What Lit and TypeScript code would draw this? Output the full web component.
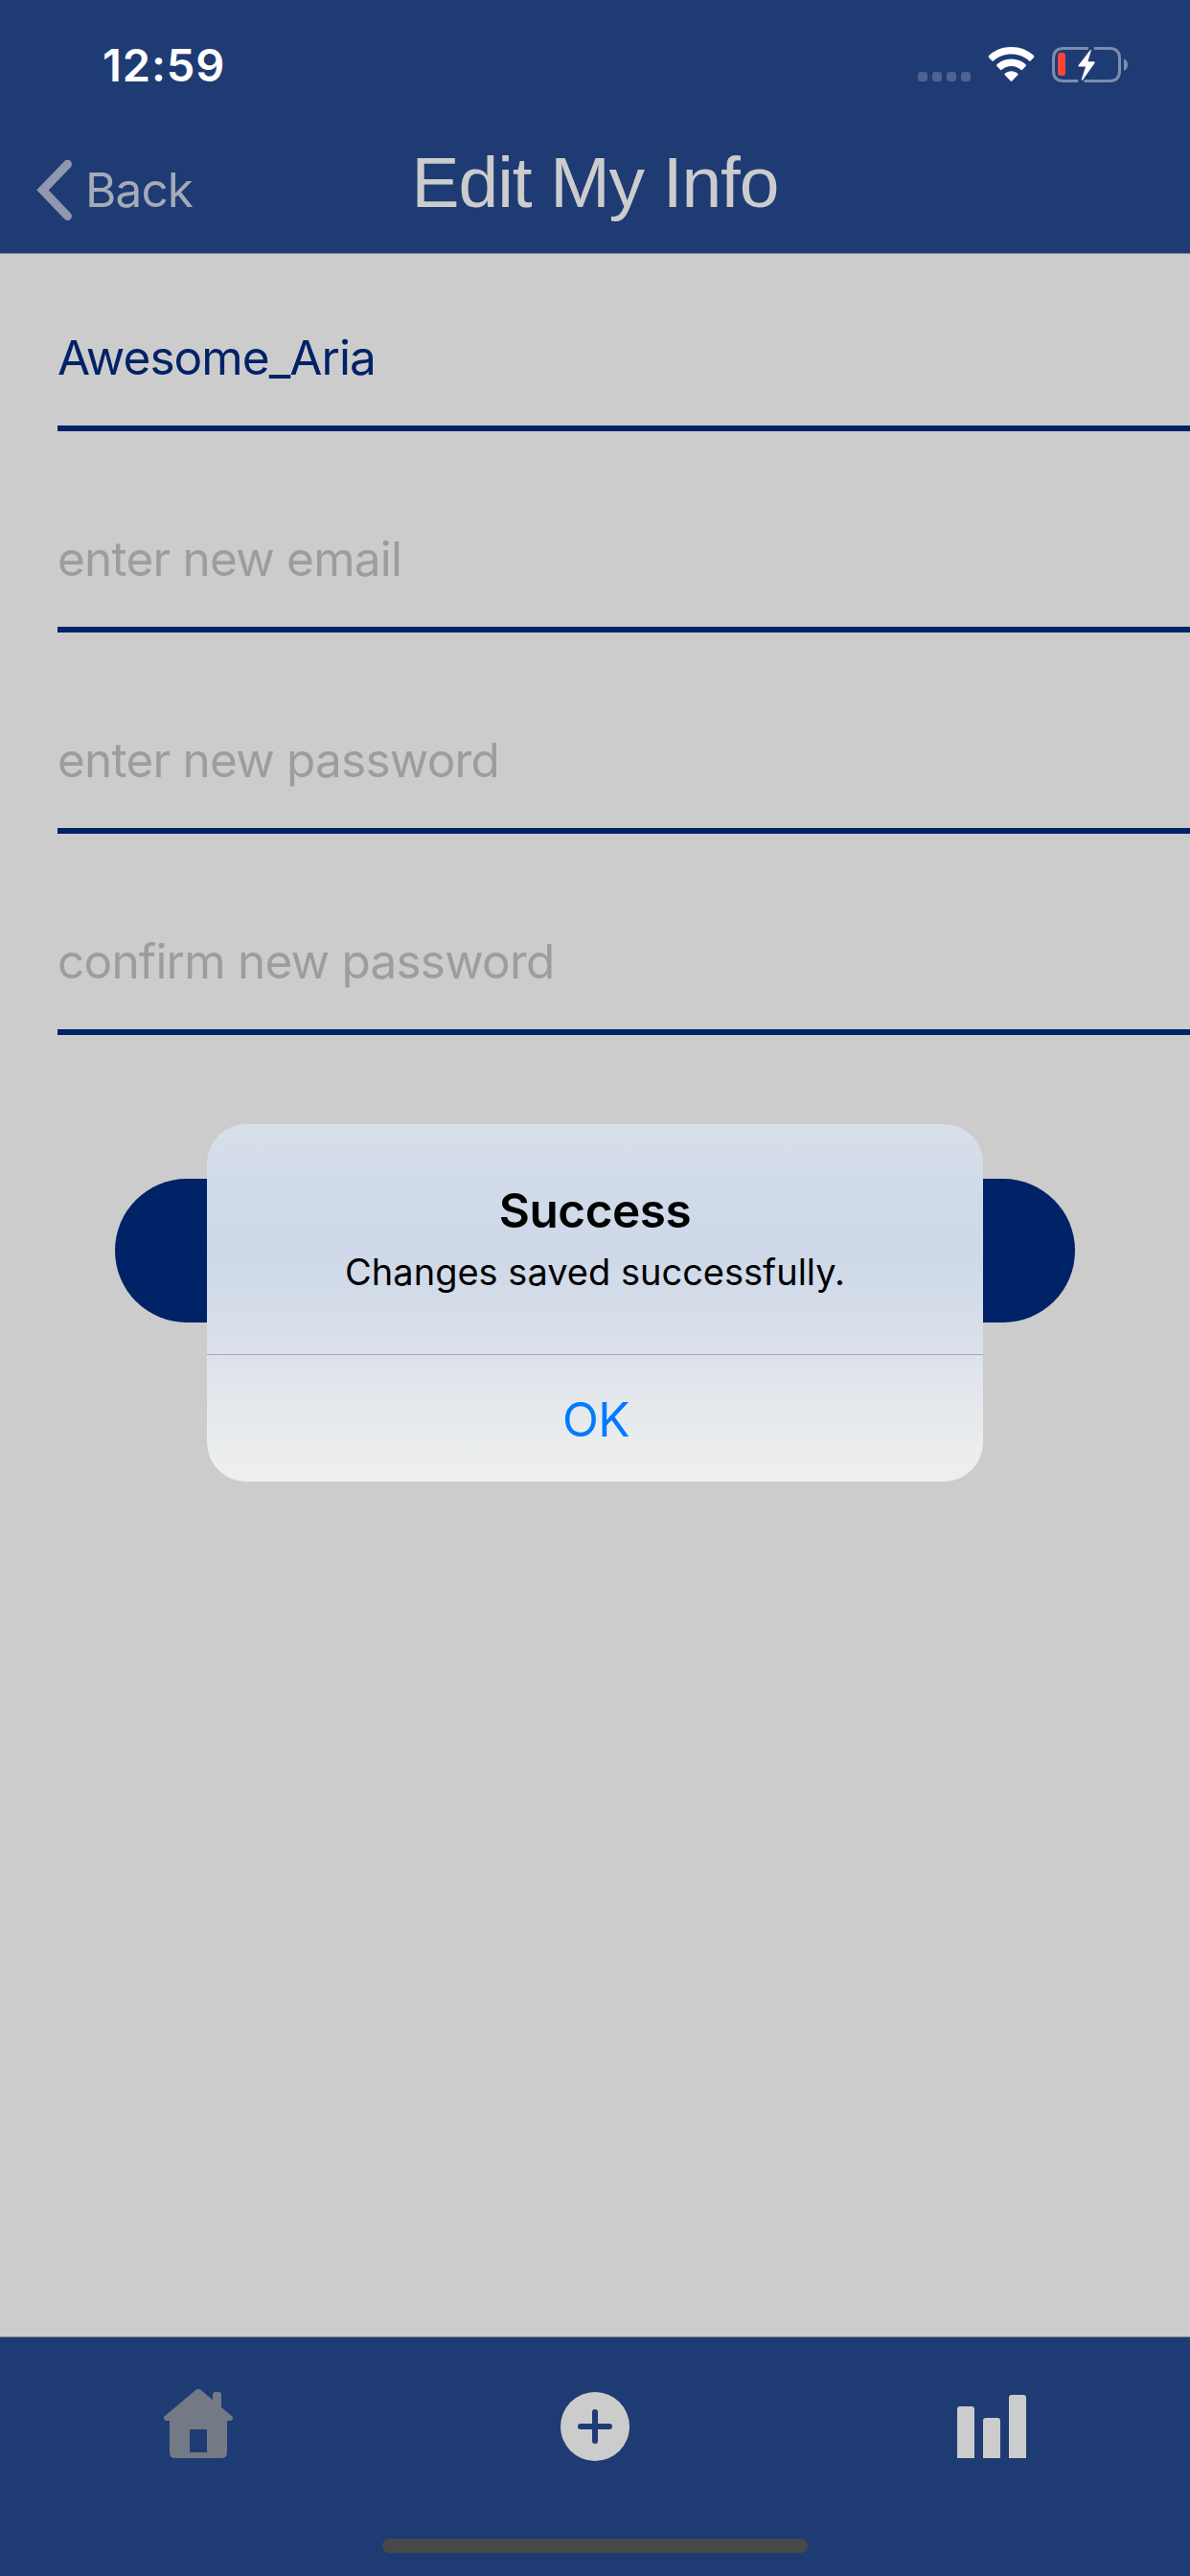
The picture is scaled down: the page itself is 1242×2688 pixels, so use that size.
import { LitElement, html, css, svg } from "lit";
import { customElement, property } from "lit/decorators.js";

@customElement("status-bar")
class StatusBar extends LitElement {
  static styles = css`
    :host { display: block; height: 132px; }
    .bar { display: flex; align-items: flex-start; height: 100%; }
    .time {
      margin: 38px 0 0 107px; width: 200px; line-height: 60px;
      font-size: 47px; font-weight: 600; letter-spacing: 0.9px; color: #fff;
    }
    .icons { margin: 44px 60px 0 auto; width: 224px; height: 46px; display: block; }
  `;
  render() {
    return html`<div class="bar">
      <div class="time">12:59</div>
      <svg class="icons" viewBox="958 44 224 46">
        ${[958, 973, 988, 1003].map((x) => svg`<rect x=${x} y="75" width="10" height="10" rx="3" fill="#4e6391"/>`)}
        <g fill="#fff">
          <path d="M1055.500 49C1064.500 49 1073 52.300 1079 58.100Q1079.800 59 1079 59.900L1075.600 63.500Q1074.800 64.200 1074 63.500C1069 59 1062.500 56.600 1055.500 56.600C1048.500 56.600 1042 59 1037 63.500Q1036.200 64.200 1035.400 63.500L1032 59.900Q1031.200 59 1032 58.100C1038 52.300 1046.500 49 1055.500 49Z"/>
          <path d="M1055.500 61.500C1061.300 61.500 1066.500 63.600 1070.600 67.300Q1071.400 68.200 1070.600 69L1067 72.800Q1066.200 73.500 1065.400 72.800C1062.700 70.400 1059.300 69 1055.500 69C1051.700 69 1048.300 70.400 1045.600 72.800Q1044.800 73.500 1044 72.800L1040.400 69Q1039.600 68.200 1040.400 67.300C1044.500 63.600 1049.700 61.500 1055.500 61.500Z"/>
          <path d="M1055.500 74.200C1058 74.200 1060.400 75.100 1062.200 76.600Q1062.800 77.400 1062.200 78.200L1056.300 84.400Q1055.500 85.200 1054.700 84.400L1048.800 78.200Q1048.200 77.400 1048.800 76.600C1050.600 75.100 1053 74.200 1055.500 74.200Z"/>
        </g>
        <g fill="none" stroke="#7d8cae" stroke-width="3">
          <path d="M1135.800 50.500H1110Q1099.500 50.500 1099.500 61V74Q1099.500 84.500 1110 84.500H1125.300"/>
          <path d="M1141.800 50.500H1158Q1168.500 50.500 1168.500 61V74Q1168.500 84.500 1158 84.500H1131.500"/>
        </g>
        <path d="M1173 61Q1177 63 1177 67.500T1173 74Z" fill="#7d8cae"/>
        <rect x="1104" y="55" width="8" height="24" rx="3" fill="#ff453a"/>
        <path d="M1137.800 52.300L1125.500 68.300Q1125 69.600 1126.300 69.600H1133L1128.700 83Q1128.700 84.500 1130 83.400L1142.600 65.800Q1143 64.300 1141.800 64.300H1135.400L1138.800 52.800Q1138.700 51.500 1137.800 52.300Z" fill="#fff"/>
      </svg>
    </div>`;
  }
}

@customElement("nav-header")
class NavHeader extends LitElement {
  static styles = css`
    :host { display: block; height: 132px; }
    .nav { display: grid; grid-template-columns: 1fr auto 1fr; align-items: start; height: 100%; }
    .back { display: flex; padding: 34px 0 0 38px; color: #a5aab7; font-size: 49.500px; line-height: 64px; letter-spacing: -0.9px; }
    .chevron { width: 38px; height: 64px; margin-right: 13px; }
    .title { margin: 14px 0 0; font: 400 75px/88px "Liberation Sans", Arial, sans-serif; letter-spacing: -1.100px; color: #cccccc; }
  `;
  render() {
    return html`<div class="nav">
      <div class="back">
        <svg class="chevron" viewBox="0 0 38 64"><path d="M32.500 5.300L6.500 32.300L32.500 59.500" fill="none" stroke="#8f98ae" stroke-width="9" stroke-linecap="round" stroke-linejoin="miter"/></svg>
        <span>Back</span>
      </div>
      <h1 class="title">Edit My Info</h1>
      <span></span>
    </div>`;
  }
}

@customElement("info-field")
class InfoField extends LitElement {
  @property() value = "";
  @property() placeholder = "";
  static styles = css`
    :host { display: block; height: 120px; box-sizing: border-box; border-bottom: 6px solid #002266; }
    .text { line-height: 86px; font-size: 49.500px; color: #002266; white-space: nowrap; letter-spacing: -0.95px; }
    .hint { color: #9d9d9d; letter-spacing: -0.78px; }
  `;
  render() {
    return this.value
      ? html`<div class="text">${this.value}</div>`
      : html`<div class="text hint">${this.placeholder}</div>`;
  }
}

@customElement("alert-dialog")
class AlertDialog extends LitElement {
  static styles = css`
    :host {
      display: flex; flex-direction: column; width: 810px; height: 373px; overflow: hidden; border-radius: 41px;
      background: linear-gradient(180deg, #d7dfea 0, #d0dae8 80px, #ced8e8 130px, #d3dce9 180px, #dde1eb 239px, #e4e8ec 290px, #ebedee 340px, #edeeef 373px);
      text-align: center; color: #000;
    }
    .body { height: 240px; box-sizing: border-box; padding-top: 58px; border-bottom: 0; }
    .heading { margin: 0; font-size: 49.500px; line-height: 64px; font-weight: 600; letter-spacing: -0.5px; }
    .message { margin: 7px 0 0; font-size: 38px; line-height: 50px; letter-spacing: 0; }
    .ok { height: 133px; box-sizing: border-box; border-top: 1px solid #9ba7b8; line-height: 135px; font-size: 49.500px; color: #007aff; letter-spacing: -0.5px; padding-left: 2px; }
  `;
  render() {
    return html`
      <div class="body">
        <h2 class="heading">Success</h2>
        <p class="message">Changes saved successfully.</p>
      </div>
      <div class="ok">OK</div>`;
  }
}

@customElement("tab-bar")
class TabBar extends LitElement {
  static styles = css`
    :host { display: flex; flex-direction: column; align-items: center; height: 250px; box-sizing: border-box; background: #1e3b74; border-top: 1px solid #85878a; }
    .tabs { display: grid; grid-template-columns: repeat(3, 1fr); width: 100%; justify-items: center; padding-top: 54px; }
    .icon { width: 72px; height: 72px; display: block; }
    .plus { margin-top: 3px; }
    .indicator { width: 444px; height: 15px; border-radius: 8px; background: #484848; margin: auto 0 24px; }
  `;
  render() {
    return html`
      <div class="tabs">
        <svg class="icon" viewBox="0 0 72 72" fill="#737a86">
          <path fill-rule="evenodd" d="M33.500 0.800Q36 -0.800 38.500 0.800L51 11.300V6Q51 3 54 3H57Q60 3 60 6V19L71.200 28.200Q72.600 30 71.800 31.600Q71 33 69 33H66V66Q66 72 60 72H12Q6 72 6 66V33H3Q1 33 0.200 31.600Q-0.600 30 0.800 28.200ZM27 42V66H45V42Z"/>
        </svg>
        <svg class="icon plus" viewBox="0 0 72 72">
          <circle cx="36" cy="36" r="36" fill="#cccccc"/>
          <path d="M36 21V51M21 36H51" stroke="#1e3b74" stroke-width="6" stroke-linecap="round"/>
        </svg>
        <svg class="icon" viewBox="0 0 72 72" fill="#cccccc">
          <path d="M0 72V21Q0 18 3 18H15Q18 18 18 21V72ZM27 72V33Q27 30 30 30H42Q45 30 45 33V72ZM54 72V9Q54 6 57 6H69Q72 6 72 9V72Z"/>
        </svg>
      </div>
      <div class="indicator"></div>`;
  }
}

@customElement("app-root")
class AppRoot extends LitElement {
  static styles = css`
    :host {
      display: flex; flex-direction: column; position: relative; width: 1242px; height: 2688px; overflow: hidden;
      background: #cccccc; font-family: Inter, "Liberation Sans", sans-serif;
    }
    .top { background: #1e3b74; height: 265px; box-sizing: border-box; border-bottom: 1px solid #85878a; }
    .form { flex: 1; display: flex; flex-direction: column; gap: 90px; padding: 65px 0 0 60px; }
    .save { height: 150px; margin: 60px 120px 0 60px; border-radius: 75px; background: #002266; }
    .alert { position: absolute; left: 216px; top: 1173px; }
  `;
  render() {
    return html`
      <header class="top"><status-bar></status-bar><nav-header></nav-header></header>
      <main class="form">
        <info-field value="Awesome_Aria"></info-field>
        <info-field placeholder="enter new email"></info-field>
        <info-field placeholder="enter new password"></info-field>
        <info-field placeholder="confirm new password"></info-field>
        <div class="save"></div>
      </main>
      <tab-bar></tab-bar>
      <alert-dialog class="alert"></alert-dialog>`;
  }
}
